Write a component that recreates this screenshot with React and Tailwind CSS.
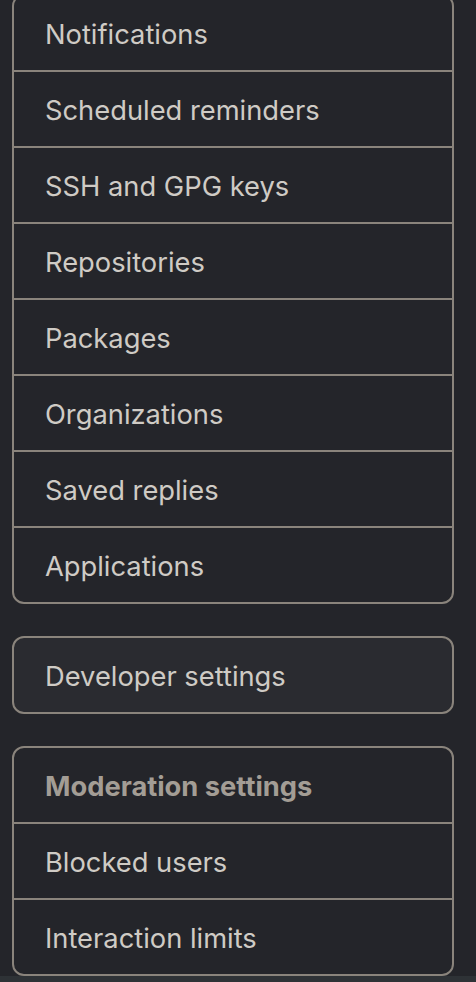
import React from 'react';

const mainItems = [
  'Notifications',
  'Scheduled reminders',
  'SSH and GPG keys',
  'Repositories',
  'Packages',
  'Organizations',
  'Saved replies',
  'Applications',
];

const moderationItems = ['Blocked users', 'Interaction limits'];

function Row({ children, first, heading }) {
  return (
    <div
      className={`flex items-center pl-[31px] pt-1 ${first ? 'h-[74px]' : 'h-[76px] border-t-2 border-[#8a847c]'} ${
        heading ? 'font-bold text-[#a39d95]' : 'text-[#cfcbc5]'
      }`}
    >
      {children}
    </div>
  );
}

export default function App() {
  return (
    <div
      className="w-[476px] h-[982px] overflow-hidden bg-[#24252a] flex flex-col"
      style={{ fontFamily: 'Inter, "Noto Sans", sans-serif' }}
    >
      <div className="flex-1 pl-3 pr-[22px] text-[27.3px] leading-none">
        <div className="-mt-[6px] border-2 border-[#8a847c] rounded-[12px] overflow-hidden">
          {mainItems.map((item, idx) => (
            <Row key={item} first={idx === 0}>
              {item}
            </Row>
          ))}
        </div>

        <div className="mt-8 border-2 border-[#8a847c] rounded-[12px] overflow-hidden bg-[#2a2b30]">
          <Row first>Developer settings</Row>
        </div>

        <div className="mt-8 border-2 border-[#8a847c] rounded-[12px] overflow-hidden">
          <Row first heading>
            Moderation settings
          </Row>
          {moderationItems.map(item => (
            <Row key={item}>{item}</Row>
          ))}
        </div>
      </div>
      <div className="h-[6px] bg-[#2e3236] shrink-0" />
    </div>
  );
}
